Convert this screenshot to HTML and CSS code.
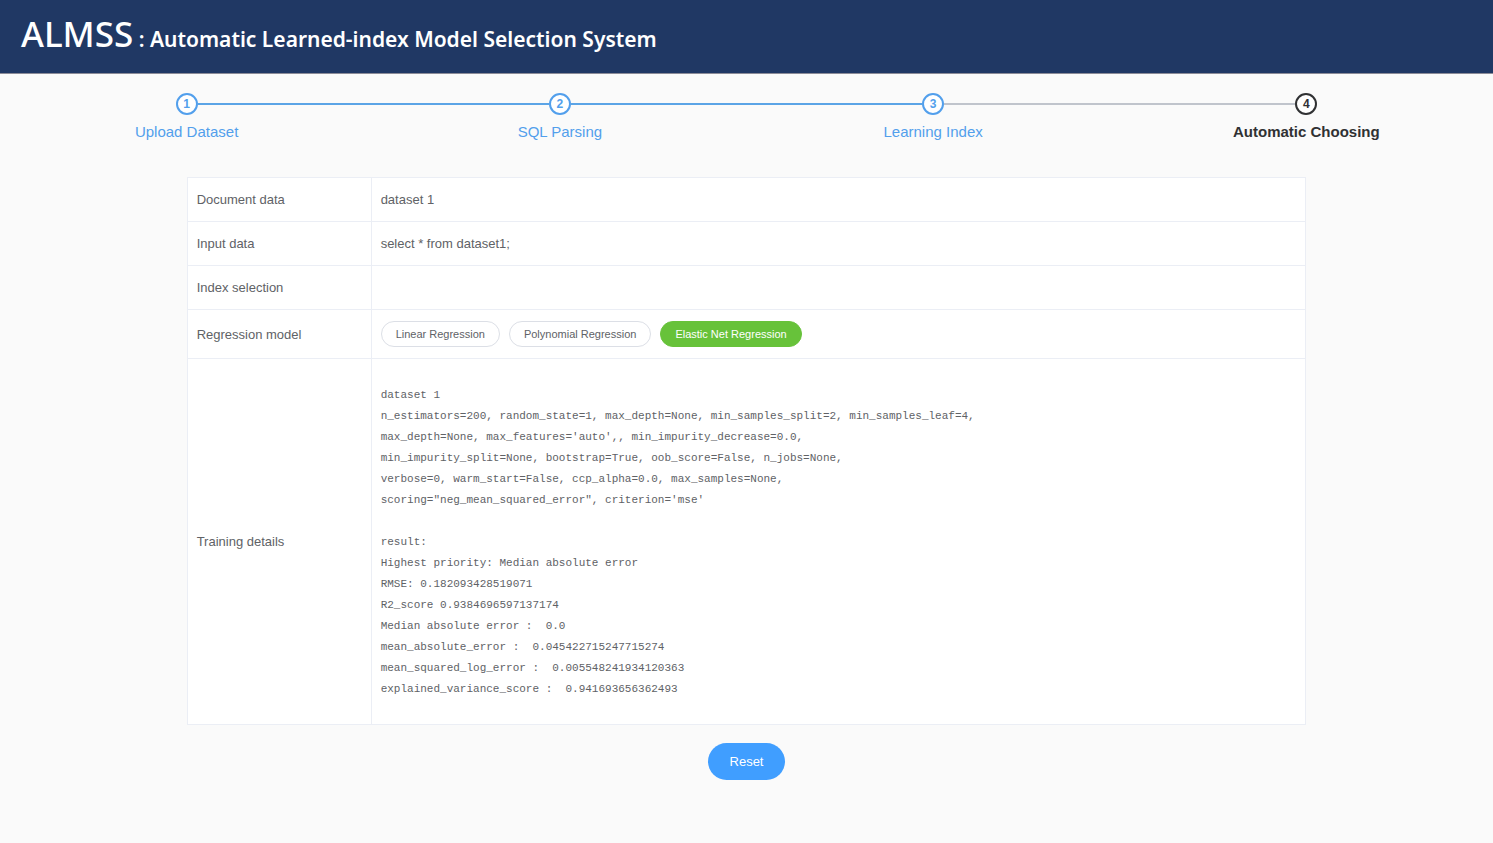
FILE: index.html
```html
<!DOCTYPE html>
<html lang="en">
<head>
<meta charset="utf-8">
<title>ALMSS</title>
<link rel="stylesheet" href="styles.css">
</head>
<body>
<header class="header">
  <h1 class="title"><span class="brand">ALMSS</span> : Automatic Learned-index Model Selection System</h1>
</header>
<main>
  <ol class="steps">
    <li class="step done"><div class="track"><span class="marker">1</span></div><span class="step-name">Upload Dataset</span></li>
    <li class="step done"><div class="track"><span class="marker">2</span></div><span class="step-name">SQL Parsing</span></li>
    <li class="step done last-done"><div class="track"><span class="marker">3</span></div><span class="step-name">Learning Index</span></li>
    <li class="step current" aria-current="step"><div class="track"><span class="marker">4</span></div><span class="step-name">Automatic Choosing</span></li>
  </ol>
  <table class="details">
    <tbody>
      <tr><th scope="row">Document data</th><td>dataset 1</td></tr>
      <tr><th scope="row">Input data</th><td>select * from dataset1;</td></tr>
      <tr><th scope="row">Index selection</th><td></td></tr>
      <tr><th scope="row">Regression model</th><td><div class="models"><button type="button" class="model">Linear Regression</button><button type="button" class="model">Polynomial Regression</button><button type="button" class="model selected" aria-pressed="true">Elastic Net Regression</button></div></td></tr>
      <tr><th scope="row">Training details</th><td class="log-cell"><pre class="log">dataset 1
n_estimators=200, random_state=1, max_depth=None, min_samples_split=2, min_samples_leaf=4,
max_depth=None, max_features='auto',, min_impurity_decrease=0.0,
min_impurity_split=None, bootstrap=True, oob_score=False, n_jobs=None,
verbose=0, warm_start=False, ccp_alpha=0.0, max_samples=None,
scoring="neg_mean_squared_error", criterion='mse'

result:
Highest priority: Median absolute error
RMSE: 0.182093428519071
R2_score 0.9384696597137174
Median absolute error :  0.0
mean_absolute_error :  0.045422715247715274
mean_squared_log_error :  0.005548241934120363
explained_variance_score :  0.941693656362493</pre></td></tr>
    </tbody>
  </table>
  <div class="actions"><button type="button" class="reset">Reset</button></div>
</main>
</body>
</html>
```
FILE: styles.css
```css
* { box-sizing: border-box; }
body {
  margin: 0;
  background: #fafafa;
  color: #606266;
  font: 13px/21px "Liberation Sans", Arial, sans-serif;
}
button { font-family: inherit; cursor: pointer; }
.header {
  padding: 10px 21px;
  background: #203864;
  border-bottom: 1px solid #8c8c98;
}
.title {
  margin: 0;
  color: #fff;
  font: 600 21px/47px "Noto Sans", sans-serif;
}
.brand { font-size: 35px; font-weight: 500; }
.steps {
  display: flex;
  margin: 0;
  padding: 19px 0 0;
  list-style: none;
}
.step {
  flex: 1;
  text-align: center;
  font-size: 15px;
  line-height: 34px;
}
.track { display: flex; align-items: center; }
.track::before, .track::after {
  content: "";
  flex: 1;
  height: 2px;
  background: #5ba4e6;
}
.step:first-child .track::before, .step:last-child .track::after { background: none; }
.last-done .track::after, .current .track::before { background: #c0c4cc; }
.marker {
  width: 22px;
  height: 22px;
  border: 2px solid;
  border-radius: 50%;
  background: #fff;
  font-size: 12px;
  font-weight: 700;
  line-height: 18px;
}
.done { color: #529fec; }
.current { color: #303133; font-weight: 700; }
.step-name { display: block; }
.details {
  width: 75%;
  margin: 28px auto 0;
  border-collapse: collapse;
  background: #fff;
}
.details th, .details td {
  height: 44px;
  padding: 11px 9px;
  border: 1px solid #ebeef5;
  text-align: left;
  vertical-align: middle;
}
.details th { width: 184px; font-weight: 400; }
.models { display: flex; gap: 9px; }
.model {
  height: 26px;
  padding: 0 14px;
  border: 1px solid #dcdfe6;
  border-radius: 13px;
  background: #fff;
  color: #606266;
  font-size: 11px;
  font-weight: 500;
}
.model.selected { border-color: #67c23a; background: #67c23a; color: #fff; }
.details .log-cell { padding: 26px 9px 24px; }
.log {
  margin: 0;
  font: 11px/21px "Liberation Mono", monospace;
}
.actions { display: flex; justify-content: center; padding: 18px 0; }
.reset {
  height: 37px;
  padding: 0 22px;
  border: 0;
  border-radius: 19px;
  background: #409eff;
  color: #fff;
  font-size: 13px;
}
```
